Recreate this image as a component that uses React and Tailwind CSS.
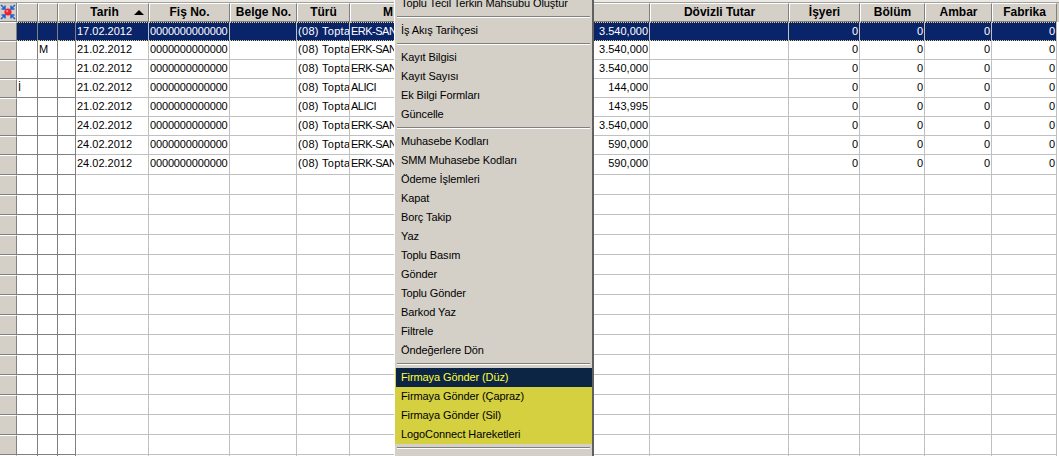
const font = { fontFamily: '"Liberation Sans", Arial, sans-serif' };

const cols = "grid-cols-[17px_21px_20px_18px_73px_81px_67px_53px_150px_150px_139px_71px_65px_67px_65px_2px]";

const rows = [
  { date: "17.02.2012", name: "ERK-SAN", amount: "3.540,000" },
  { date: "21.02.2012", name: "ERK-SAN", amount: "3.540,000", b: "M" },
  { date: "21.02.2012", name: "ERK-SAN", amount: "3.540,000" },
  { date: "21.02.2012", name: "ALICI", amount: "144,000", a: "İ" },
  { date: "21.02.2012", name: "ALICI", amount: "143,995" },
  { date: "24.02.2012", name: "ERK-SAN", amount: "3.540,000" },
  { date: "24.02.2012", name: "ERK-SAN", amount: "590,000" },
  { date: "24.02.2012", name: "ERK-SAN", amount: "590,000" },
];

const headers = ["Tarih", "Fiş No.", "Belge No.", "Türü", "M", "", "Dövizli Tutar", "İşyeri", "Bölüm", "Ambar", "Fabrika"];

const menuGroups = [
  ["Toplu Tecil Terkin Mahsubu Oluştur"],
  ["İş Akış Tarihçesi"],
  ["Kayıt Bilgisi", "Kayıt Sayısı", "Ek Bilgi Formları", "Güncelle"],
  ["Muhasebe Kodları", "SMM Muhasebe Kodları", "Ödeme İşlemleri", "Kapat", "Borç Takip", "Yaz", "Toplu Basım", "Gönder", "Toplu Gönder", "Barkod Yaz", "Filtrele", "Öndeğerlere Dön"],
];

function HeaderCell({ children, sort, hideRight, className = "text-center" }) {
  return (
    <div className={`relative h-[19px] overflow-hidden whitespace-nowrap border-t border-l border-t-white border-l-white border-b border-b-[#808080] bg-[#d4d0c8] text-[12px] font-bold leading-[17px] text-black ${hideRight ? "" : "border-r border-r-[#808080]"} ${className}`}>
      {children}
      {sort && <span className="absolute right-[4px] top-[6px] h-0 w-0 border-x-[5px] border-b-[5px] border-x-transparent border-b-black" />}
    </div>
  );
}

function Cell({ children, dark, darkLine, right, selected, className = "" }) {
  const line = selected
    ? "border-y border-y-[#e6d578] [border-top-style:dotted] [border-bottom-style:dotted] bg-[#0a246a] text-white"
    : `border-b text-black ${darkLine ? "border-b-[#808080]" : "border-b-[#c0c0c0]"}`;
  return (
    <div
      className={`overflow-hidden whitespace-nowrap border-r px-[1px] text-[11px] leading-[17px] ${right ? "text-right" : "text-left"} ${dark ? "border-r-[#808080]" : "border-r-[#c0c0c0]"} ${line} ${className}`}
    >
      {children}
    </div>
  );
}

function RowHead() {
  return <div className="border-t border-r border-b border-t-white border-r-[#808080] border-b-[#808080] bg-[#d4d0c8]" />;
}

function Row({ row, tall, selected, darkLine }) {
  const s = { selected };
  return (
    <div className={`grid ${cols} ${tall ? "h-[20px]" : "h-[19px]"}`}>
      <RowHead />
      <Cell dark darkLine={darkLine} {...s}>{row?.a}</Cell>
      <Cell dark darkLine={darkLine} {...s}>{row?.b}</Cell>
      <Cell dark darkLine={darkLine} {...s} />
      <Cell {...s}>{row?.date}</Cell>
      <Cell {...s} className="tracking-[-0.15px]">{row && "0000000000000"}</Cell>
      <Cell {...s} />
      <Cell {...s} className="tracking-[0.3px]">{row && "(08) Topta"}</Cell>
      <Cell {...s} className="tracking-[-0.5px]">{row?.name}</Cell>
      <Cell right {...s}>{row?.amount}</Cell>
      <Cell {...s} />
      {[0, 1, 2, 3].map((i) => (
        <Cell key={i} right {...s}>{row && "0"}</Cell>
      ))}
      <div />
    </div>
  );
}

function Separator() {
  return (
    <div className="flex h-[8px] items-center px-[2px]">
      <div className="h-[2px] w-full border-t border-b border-t-[#808080] border-b-white" />
    </div>
  );
}

function MenuItem({ children, active }) {
  return (
    <div
      className={`h-[19px] whitespace-nowrap text-[11px] leading-[19px] tracking-[-0.1px] ${active ? "ml-[1px] pl-[5px] bg-[#0c2545] text-[#ffff33]" : "pl-[6px] text-black"}`}
    >
      {children}
    </div>
  );
}

function StretchIcon() {
  return (
    <svg width="16" height="16" viewBox="0 0 16 16" className="block">
      <circle cx="8" cy="8" r="3.6" fill="#f02030" />
      <circle cx="7.2" cy="7.2" r="1.1" fill="#ff9090" />
      <g stroke="#1f5fd0" strokeWidth="1.5" fill="none">
        <path d="M1 1 L5 5 M5 1.5 V5 H1.5" />
        <path d="M15 1 L11 5 M11 1.5 V5 H14.5" />
        <path d="M1 15 L5 11 M5 14.5 V11 H1.5" />
        <path d="M15 15 L11 11 M11 14.5 V11 H14.5" />
      </g>
    </svg>
  );
}

export default function App() {
  return (
    <div className="relative h-[456px] w-[1059px] overflow-hidden bg-white" style={font}>
      {/* top edge */}
      <div className="h-[3px] border-b border-b-[#a0a0a0] bg-[#ece9e2]" />

      {/* header */}
      <div className={`grid ${cols} h-[19px]`}>
        <div className="flex items-center justify-center border-r border-b border-r-[#808080] border-b-[#808080] bg-[#d4d0c8]">
          <StretchIcon />
        </div>
        <HeaderCell />
        <HeaderCell />
        <HeaderCell />
        {headers.map((h, i) => (
          <HeaderCell
            key={i}
            sort={h === "Tarih"}
            hideRight={h === "M"}
            className={h === "Tarih" ? "pr-[16px] text-center" : h === "M" ? "pl-[32px] text-left" : "text-center"}
          >
            {h}
          </HeaderCell>
        ))}
        <div className="bg-[#d4d0c8]" />
      </div>

      {/* grid body */}
      {Array.from({ length: 23 }).map((_, i) => (
        <Row key={i} row={rows[i]} selected={i === 0} tall={i > 6} darkLine={i >= 2} />
      ))}

      {/* context menu */}
      <div className="absolute left-[394px] top-[-6px] w-[200px] border-l border-r-2 border-l-white border-r-[#606060] bg-[#d4d0c8]">
        {menuGroups.map((group, i) => (
          <div key={i}>
            {group.map((item) => (
              <MenuItem key={item}>{item}</MenuItem>
            ))}
            <Separator />
          </div>
        ))}
        <div className="bg-[#d4d040]">
          <MenuItem active>Firmaya Gönder (Düz)</MenuItem>
          <MenuItem>Firmaya Gönder (Çapraz)</MenuItem>
          <MenuItem>Firmaya Gönder (Sil)</MenuItem>
          <MenuItem>LogoConnect Hareketleri</MenuItem>
        </div>
        <Separator />
        <div className="h-[19px]" />
      </div>
    </div>
  );
}
